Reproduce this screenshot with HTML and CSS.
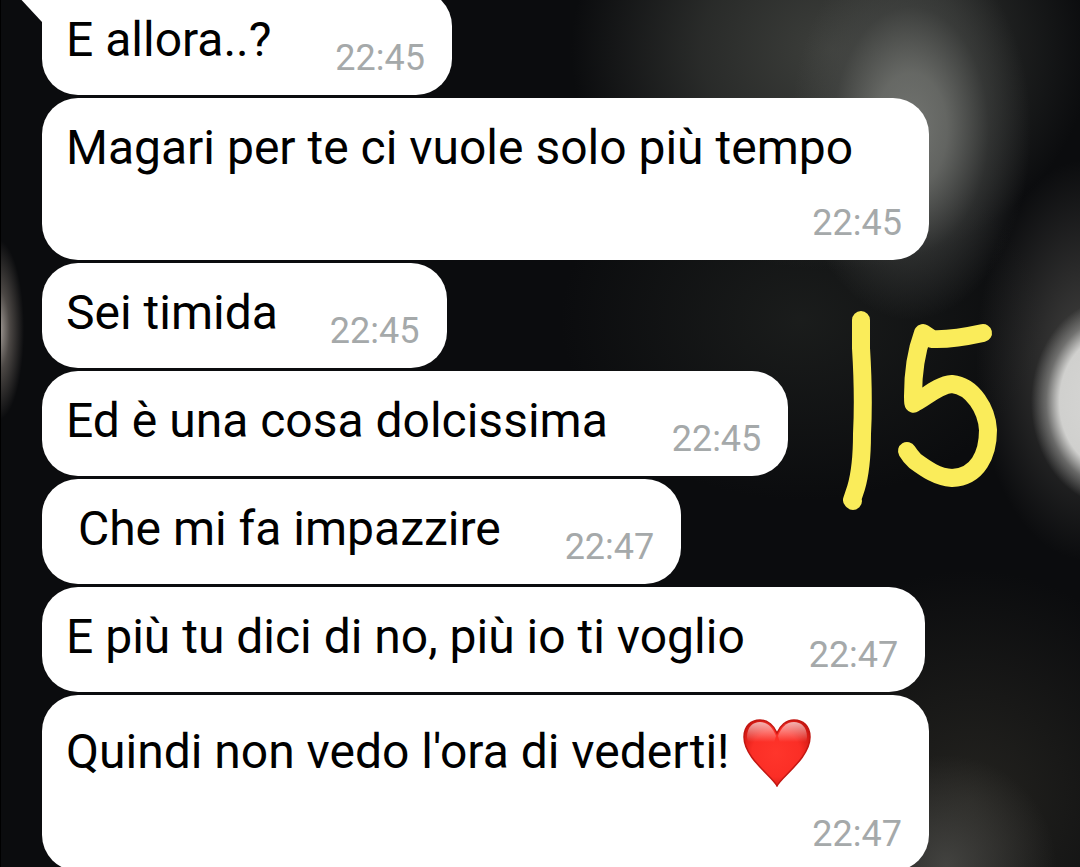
FILE: index.html
```
<!DOCTYPE html>
<html lang="it">
<head>
    <meta charset="UTF-8">
    <meta name="viewport" content="width=device-width, initial-scale=1.0">
    <title>Chat</title>
    <link rel="stylesheet" href="styles.css">
</head>
<body>

<main class="chat">
    <div class="message first">
        <svg class="tail" viewBox="0 0 34 34" aria-hidden="true"><path d="M4 0H34V34L28 32L2 4Q0 0 4 0Z" fill="#fff"/></svg>
        <p class="text">E allora..? </p>
        <time class="time">22:45</time>
    </div>
    <div class="message">
        <p class="text">Magari per te ci vuole solo più tempo</p>
        <time class="time">22:45</time>
    </div>
    <div class="message">
        <p class="text">Sei timida</p>
        <time class="time">22:45</time>
    </div>
    <div class="message">
        <p class="text">Ed è una cosa dolcissima </p>
        <time class="time">22:45</time>
    </div>
    <div class="message">
        <p class="text"> Che mi fa impazzire </p>
        <time class="time">22:47</time>
    </div>
    <div class="message">
        <p class="text">E più tu dici di no, più io ti voglio </p>
        <time class="time">22:47</time>
    </div>
    <div class="message">
        <p class="text">Quindi non vedo l'ora di vederti! <svg class="heart" viewBox="0 0 70 70" role="img" aria-label="cuore rosso">
            <defs>
                <radialGradient id="heart-fill" cx="35" cy="36" r="40" gradientUnits="userSpaceOnUse">
                    <stop offset="0" stop-color="#ff352b"/>
                    <stop offset="0.6" stop-color="#fb2e26"/>
                    <stop offset="1" stop-color="#cc150f"/>
                </radialGradient>
                <linearGradient id="heart-shine" x1="0" y1="4" x2="0" y2="25" gradientUnits="userSpaceOnUse">
                    <stop offset="0" stop-color="#fff" stop-opacity="0.7"/>
                    <stop offset="1" stop-color="#fff" stop-opacity="0"/>
                </linearGradient>
            </defs>
            <path d="M36 69C32 60 3 41 3 20C3 9 10 3 19 3C27 3 33 9 36 16C39 9 45 3 53 3C62 3 69 9 69 20C69 41 40 60 36 69Z" fill="url(#heart-fill)" stroke="#c21712" stroke-width="1.5"/>
            <path d="M6 20C6 10 12 5 19 5C27 5 32 11 35 19L33 26H7Z" fill="url(#heart-shine)"/>
            <path d="M66 20C66 10 60 5 53 5C45 5 40 11 37 19L39 26H65Z" fill="url(#heart-shine)"/>
        </svg></p>
        <time class="time">22:47</time>
    </div>

    <!-- numero scritto a mano sopra la chat -->
    <svg class="doodle" viewBox="0 0 160 212" aria-hidden="true">
        <path d="M21 14V42Q24 90 22 128Q22 162 16 182L12 194L13 195"/>
        <path d="M143 27Q111 34 92 33L83 27Q73 54 73 90Q73 100 74 97C83 94 97 79 112 78C133 80 147 104 148 124C148 148 138 171 112 172C97 171 86 163 75 155Q70 150 67 145"/>
    </svg>
</main>

</body>
</html>
```

FILE: styles.css
```
body {
    margin: 0;
    font-family: Roboto, "Liberation Sans", sans-serif;
    color: #000;
    background-color: #0b0c0e;
}

.chat {
    position: relative;
    display: flex;
    flex-direction: column;
    align-items: flex-start;
    gap: 3px;
    box-sizing: border-box;
    height: 100vh;
    padding-left: 41px;
    border-left: 1px solid #000;
    overflow: hidden;
    /* luci sfocate dello sfondo */
    background-image:
        radial-gradient(ellipse 84px 104px at 1114px 402px, #d8d8d6 0%, #d0d0ce 66%, rgba(150, 150, 148, 0.6) 82%, transparent 100%),
        radial-gradient(ellipse 26px 90px at -3px 330px, #aaa39e 0%, rgba(120, 112, 106, 0.6) 45%, transparent 100%),
        radial-gradient(ellipse 120px 190px at 910px 130px, rgba(126, 128, 124, 0.85) 0%, rgba(120, 122, 118, 0.75) 30%, rgba(76, 78, 76, 0.45) 65%, transparent 100%),
        radial-gradient(ellipse 260px 220px at 830px 50px, rgba(66, 68, 64, 0.9) 0%, rgba(54, 56, 53, 0.7) 50%, transparent 100%),
        radial-gradient(ellipse 110px 200px at 1085px 360px, rgba(74, 73, 71, 0.9) 0%, transparent 100%),
        radial-gradient(ellipse 110px 110px at 945px 865px, rgba(76, 76, 73, 0.8) 0%, transparent 100%),
        radial-gradient(ellipse 220px 230px at 970px 800px, rgba(38, 37, 33, 0.9) 0%, transparent 100%),
        radial-gradient(ellipse 240px 180px at 800px 320px, rgba(28, 30, 29, 0.9) 0%, transparent 100%);
}

.message {
    position: relative;
    display: flex;
    flex-wrap: wrap;
    flex-shrink: 0;
    align-items: flex-end;
    gap: 15px 52px;
    box-sizing: border-box;
    max-width: 887px;
    padding: 22px 27px 16px 24px;
    border-radius: 36px;
    background-color: #fff;
}

.first {
    margin-top: -10px;
    border-top-left-radius: 0;
}

.tail {
    position: absolute;
    top: 0;
    left: -28px;
    width: 34px;
    height: 34px;
}

.text {
    margin: 0 0 11px;
    font-size: 48px;
    line-height: 56px;
    white-space: pre;
}

.time {
    margin-left: auto;
    font-size: 36px;
    line-height: 42px;
    color: #a5a9aa;
}

.heart {
    width: 70px;
    height: 70px;
    vertical-align: -19px;
}

.doodle {
    position: absolute;
    top: 306px;
    left: 839px;
    width: 160px;
    height: 212px;
    fill: none;
    stroke: #faec5a;
    stroke-width: 18px;
    stroke-linecap: round;
    stroke-linejoin: round;
}
```
